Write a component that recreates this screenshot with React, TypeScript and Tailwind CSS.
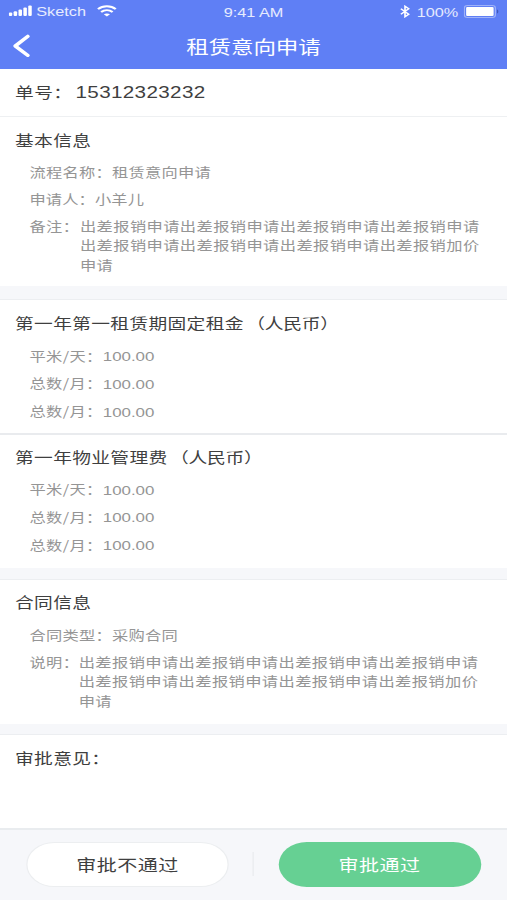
import { type ReactNode } from 'react'

const remark = '出差报销申请出差报销申请出差报销申请出差报销申请出差报销申请出差报销申请出差报销申请出差报销加价申请'

const fees = [
  { label: '平米/天：', value: '100.00' },
  { label: '总数/月：', value: '100.00' },
  { label: '总数/月：', value: '100.00' },
]

function SectionTitle({ children }: { children: ReactNode }) {
  return <h2 className="h-8 px-3 text-[15px] leading-8 tracking-[0.25px] text-[#3f3f3f] whitespace-nowrap">{children}</h2>
}

function Currency() {
  return <span className="ml-[2px] tracking-[-0.2px]">（人民币）</span>
}

function Divider({ className }: { className: string }) {
  return <div className={`shrink-0 bg-[#f6f7fa] border-b border-[#eceef1] ${className}`} />
}

function FeeList() {
  return (
    <div className="pl-[23.5px] leading-[27.8px] text-[#959595]">
      {fees.map((fee, i) => (
        <div key={i} className="flex h-[27.8px] whitespace-nowrap">
          <span>{fee.label}</span>
          <span className="pt-[1.5px] font-['Liberation_Sans',sans-serif] text-[13.5px] tracking-normal">{fee.value}</span>
        </div>
      ))}
    </div>
  )
}

function StatusBar() {
  return (
    <div className="flex h-6 items-center justify-between px-[7px] font-['Liberation_Sans',sans-serif] text-[13px] tracking-normal text-white/85">
      <div className="flex w-32 items-center">
        <svg className="-mt-0.5" width="19" height="12" viewBox="0 0 19 12" fill="white">
          <rect x="0" y="7.5" width="2.8" height="3.5" rx="1" />
          <rect x="3.9" y="6.3" width="2.8" height="4.7" rx="1" />
          <rect x="7.8" y="4.5" width="2.8" height="6.5" rx="1" />
          <rect x="11.7" y="2.5" width="2.8" height="8.5" rx="1" />
          <rect x="15.6" y="0.5" width="2.8" height="10.5" rx="1" />
        </svg>
        <span className="ml-[3px]">Sketch</span>
        <svg className="ml-[8px] -mt-[3px]" width="17" height="12" viewBox="0 0 17 12" fill="none" stroke="white" strokeWidth="1.9">
          <path d="M1.4 4.2C5.2 0.3 11.8 0.3 15.6 4.2" />
          <path d="M3.9 7C6.6 4.7 10.4 4.7 13.1 7" />
          <path d="M6 9.2C7.4 8.1 9.6 8.1 11 9.2L8.5 11.6Z" fill="white" stroke="none" />
        </svg>
      </div>
      <span className="pt-0.5">9:41 AM</span>
      <div className="flex w-32 items-center justify-end">
        <svg className="-mt-[2px]" width="8" height="13" viewBox="0 0 8 13" fill="none" stroke="white" strokeWidth="1.3">
          <path d="M0.7 3.7L7 9.2L4 11.8V1.2L7 3.8L0.7 9.3" />
        </svg>
        <span className="ml-[5px] pt-0.5">100%</span>
        <svg className="ml-[4.5px] -mr-[1.5px] -mt-0.5" width="29" height="13" viewBox="0 0 29 13">
          <rect x="0.5" y="0.5" width="24.8" height="12" rx="2.5" fill="none" stroke="white" strokeOpacity="0.4" />
          <rect x="1.9" y="2" width="22" height="9" rx="1" fill="white" />
          <path d="M26.6 4.5C28 5 28 8 26.6 8.5Z" fill="#4058b8" />
        </svg>
      </div>
    </div>
  )
}

export default function App() {
  return (
    <div className="w-[507px] h-[900px] overflow-hidden bg-white">
      {/* Wide type: the whole screen is stretched horizontally */}
      <div className="flex h-[900px] w-[405.6px] origin-top-left scale-x-125 flex-col bg-white font-['Noto_Sans_CJK_SC',sans-serif] text-[13px] tracking-[0.32px]">
        {/* Header */}
        <header className="h-[69px] shrink-0 bg-[#5f7ff5]">
          <StatusBar />
          <div className="flex h-[44px] items-center px-[10px]">
            <button className="w-5">
              <svg width="15" height="24" viewBox="0 0 15 24" fill="none" stroke="white" strokeWidth="3.2" strokeLinecap="round" strokeLinejoin="round">
                <path d="M12.2 2.3L2.2 12L12.2 21.3" />
              </svg>
            </button>
            <h1 className="flex-1 pr-5 text-center text-[18px] tracking-[-0.1px] text-white">租赁意向申请</h1>
          </div>
        </header>

        <div className="flex h-12 shrink-0 items-center border-b border-[#eef0f2] px-3 text-[15px] tracking-[0.3px] text-[#3f3f3f]">
          <span>单号：</span>
          <span className="ml-[2.5px] font-['Liberation_Sans',sans-serif] text-[16.5px] tracking-[0.28px]">15312323232</span>
        </div>

        <section className="h-[169px] shrink-0 pt-[7px]">
          <SectionTitle>基本信息</SectionTitle>
          <div className="pt-[3px] pl-[23.5px] leading-[26.5px] text-[#959595]">
            <p className="tracking-[0.2px]">流程名称：租赁意向申请</p>
            <p className="tracking-[0.1px]">申请人：小羊儿</p>
            <div className="flex pt-1 leading-[19.3px]">
              <span className="shrink-0">备注：</span>
              <p className="ml-[0.5px] w-[321px] break-all">{remark}</p>
            </div>
          </div>
        </section>
        <Divider className="h-[14px]" />

        <section className="h-[133px] shrink-0 pt-[7px]">
          <SectionTitle>第一年第一租赁期固定租金<Currency /></SectionTitle>
          <div className="pt-[2.5px]">
            <FeeList />
          </div>
        </section>
        <div className="h-[2px] shrink-0 bg-[#e9ebee]" />

        <section className="h-[133px] shrink-0 pt-[6px]">
          <SectionTitle>第一年物业管理费<Currency /></SectionTitle>
          <div className="pt-0.5">
            <FeeList />
          </div>
        </section>
        <Divider className="h-[12px]" />

        <section className="h-[144px] shrink-0 pt-[6px]">
          <SectionTitle>合同信息</SectionTitle>
          <div className="pt-[3.5px] pl-[23.5px] leading-[26.5px] text-[#959595]">
            <p className="tracking-[0.2px]">合同类型：采购合同</p>
            <div className="flex pt-1 leading-[19.3px]">
              <span className="shrink-0">说明：</span>
              <p className="-ml-[0.5px] w-[321px] break-all">{remark}</p>
            </div>
          </div>
        </section>
        <Divider className="h-[11px]" />

        <section className="h-[93px] shrink-0 pt-[7px]">
          <SectionTitle>审批意见：</SectionTitle>
        </section>

        {/* Actions */}
        <footer className="flex flex-1 items-center justify-between border-t-2 border-[#e9ecef] bg-[#f6f7fa] px-[21px] pb-[2px] text-base tracking-[0.4px]">
          <button className="h-[45px] w-[162px] rounded-full border border-[#eceef0] bg-white text-[#3f3f3f]">审批不通过</button>
          <div className="h-6 w-px bg-[#e9ebee]" />
          <button className="h-[45px] w-[162px] rounded-full bg-[#66d093] text-white">审批通过</button>
        </footer>
      </div>
    </div>
  )
}
